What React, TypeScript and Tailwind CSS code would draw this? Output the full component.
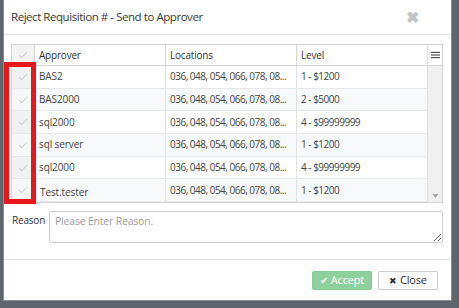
import React from 'react';

interface Approver {
  id: number;
  name: string;
  locations: string;
  level: string;
}

const approvers: Approver[] = [
  { id: 1, name: 'BAS2', locations: '036, 048, 054, 066, 078, 08...', level: '1 - $1200' },
  { id: 2, name: 'BAS2000', locations: '036, 048, 054, 066, 078, 08...', level: '2 - $5000' },
  { id: 3, name: 'sql2000', locations: '036, 048, 054, 066, 078, 08...', level: '4 - $99999999' },
  { id: 4, name: 'sql server', locations: '036, 048, 054, 066, 078, 08...', level: '1 - $1200' },
  { id: 5, name: 'sql2000', locations: '036, 048, 054, 066, 078, 08...', level: '4 - $99999999' },
  { id: 6, name: 'Test.tester', locations: '036, 048, 054, 066, 078, 08...', level: '1 - $1200' },
];

const Check = ({ className = '' }: { className?: string }) => (
  <svg viewBox="0 0 12 10" className={`w-[10px] h-[8px] ${className}`} fill="none" stroke="currentColor" strokeWidth="1.4">
    <path d="M1 5.2 L4.3 8.3 L11 1.5" />
  </svg>
);

const App: React.FC = () => {
  return (
    <div className="w-[459px] h-[308px] bg-[#5e656d] overflow-hidden font-['Open_Sans',sans-serif] text-[#333]">
      <div className="ml-[3px] w-[449px] h-[301px] bg-white border-x border-b border-[#8a8d91] flex flex-col">
        {/* header */}
        <div className="h-[35px] shrink-0 flex items-center justify-between pl-[7px] pr-[32px] border-b border-[#e5e5e5]">
          <h2 className="text-[11.5px] tracking-[-0.45px] text-[#3a3a3a]">Reject Requisition # - Send to Approver</h2>
          <span className="text-[#c4c4c4] text-[16px] font-bold leading-none">✖</span>
        </div>

        {/* grid */}
        <div className="px-[7px] pt-[9px]">
          <div className="relative w-[432px] border border-[#d4d4d4] flex">
            <div className="flex-1">
              <div className="flex h-[21px] border-b border-[#d4d4d4] text-[10px] tracking-[-0.2px] text-[#333]">
                <div className="w-[23px] bg-[#f3f3f3] border-r border-[#d4d4d4] flex items-center justify-center text-[#cfcfcf]">
                  <Check />
                </div>
                <div className="w-[131px] border-r border-[#d4d4d4] flex items-center pl-[4px]">Approver</div>
                <div className="w-[131px] border-r border-[#d4d4d4] flex items-center pl-[4px]">Locations</div>
                <div className="flex-1 flex items-center pl-[4px]">Level</div>
              </div>
              {approvers.map((a, i) => (
                <div
                  key={a.id}
                  className={`flex h-[22.7px] border-b border-[#e8e8e8] text-[10px] text-[#444] whitespace-nowrap ${i % 2 === 1 ? 'bg-[#f7f9fb]' : 'bg-white'}`}
                >
                  <div className={`w-[23px] border-r border-[#e2e2e2] flex items-center justify-center text-[#d2d2d2] ${i % 2 === 1 ? 'bg-[#f7f7f7]' : 'bg-[#f1f1f1]'}`}>
                    <Check />
                  </div>
                  <div className={`w-[131px] border-r border-[#e2e2e2] flex items-center pl-[4px] tracking-[-0.1px] ${a.id === 6 ? 'pt-[4px] pl-[5px]' : ''}`}>{a.name}</div>
                  <div className="w-[131px] border-r border-[#e2e2e2] flex items-center pl-[4px] tracking-[-0.5px] overflow-hidden">{a.locations}</div>
                  <div className="flex-1 flex items-center pl-[4px] tracking-[-0.5px]">{a.level}</div>
                </div>
              ))}
            </div>
            {/* scrollbar column */}
            <div className="w-[15px] bg-[#f0f0f0] border-l border-[#e0e0e0] flex flex-col justify-between">
              <div className="h-[21px] bg-white border-b border-[#d4d4d4] flex items-center justify-center">
                <svg viewBox="0 0 10 8" className="w-[9px] h-[8px]" fill="#444">
                  <rect x="0" y="0.5" width="10" height="1.2" />
                  <rect x="0" y="3.4" width="10" height="1.2" />
                  <rect x="0" y="6.3" width="10" height="1.2" />
                </svg>
              </div>
              <div className="h-[12px] flex items-center justify-center">
                <svg viewBox="0 0 8 5" className="w-[7px] h-[4px]" fill="#a8a8a8">
                  <path d="M0 0 L8 0 L4 5 Z" />
                </svg>
              </div>
            </div>

            {/* highlight box */}
            <div className="absolute left-[-8px] top-[17px] w-[32px] h-[142px] border-[5px] border-[#e8161d]" />
          </div>
        </div>

        {/* reason */}
        <div className="flex items-start px-[8px] pt-[8px] pb-[16px] border-b border-[#e5e5e5]">
          <label className="w-[37px] text-[10px] tracking-[-0.2px] text-[#333] pt-[2px]">Reason</label>
          <textarea
            placeholder="Please Enter Reason."
            className="w-[394px] h-[32px] border border-[#cfcfcf] rounded-[2px] px-[5px] py-[2px] text-[10.5px] tracking-[-0.2px] text-[#555] placeholder:text-[#a0a0a0] resize-y outline-none"
          />
        </div>

        {/* footer */}
        <div className="flex justify-end gap-[6px] pr-[13px] pt-[11px]">
          <button className="w-[60px] h-[19px] bg-[#8fd19e] border border-[#86cb96] rounded-[2px] text-white text-[11px] tracking-[-0.2px] flex items-center justify-center gap-[3px]">
            <span className="text-[10px]">✔</span>Accept
          </button>
          <button className="w-[60px] h-[19px] bg-white border border-[#cccccc] rounded-[2px] text-[#333] text-[11px] tracking-[-0.2px] flex items-center justify-center gap-[3px]">
            <span className="text-[9px]">✖</span>Close
          </button>
        </div>
      </div>
    </div>
  );
};

export default App;
